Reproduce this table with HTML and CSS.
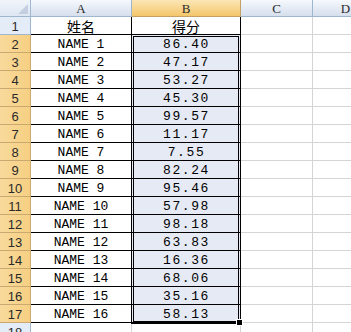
FILE: index.html
```html
<!DOCTYPE html>
<html>
<head>
<meta charset="utf-8">
<link rel="stylesheet" href="styles.css">
</head>
<body>
<div class="sheet">
  <div class="corner"><svg class="tri" width="10" height="10" viewBox="0 0 10 10"><polygon points="10,0 10,10 0,10" fill="#c3cfe0"/></svg></div>
  <div class="ch">A</div>
  <div class="ch sel">B</div>
  <div class="ch">C</div>
  <div class="ch last">D</div>

  <div class="rh">1</div><div class="c a t cjk">姓名</div><div class="c b t cjk">得分</div><div class="g"></div><div class="g last"></div>
  <div class="rh sel">2</div><div class="c a">NAME 1</div><div class="c b n">86.40</div><div class="g"></div><div class="g last"></div>
  <div class="rh sel">3</div><div class="c a">NAME 2</div><div class="c b n">47.17</div><div class="g"></div><div class="g last"></div>
  <div class="rh sel">4</div><div class="c a">NAME 3</div><div class="c b n">53.27</div><div class="g"></div><div class="g last"></div>
  <div class="rh sel">5</div><div class="c a">NAME 4</div><div class="c b n">45.30</div><div class="g"></div><div class="g last"></div>
  <div class="rh sel">6</div><div class="c a">NAME 5</div><div class="c b n">99.57</div><div class="g"></div><div class="g last"></div>
  <div class="rh sel">7</div><div class="c a">NAME 6</div><div class="c b n">11.17</div><div class="g"></div><div class="g last"></div>
  <div class="rh sel">8</div><div class="c a">NAME 7</div><div class="c b n">7.55</div><div class="g"></div><div class="g last"></div>
  <div class="rh sel">9</div><div class="c a">NAME 8</div><div class="c b n">82.24</div><div class="g"></div><div class="g last"></div>
  <div class="rh sel">10</div><div class="c a">NAME 9</div><div class="c b n">95.46</div><div class="g"></div><div class="g last"></div>
  <div class="rh sel">11</div><div class="c a">NAME 10</div><div class="c b n">57.98</div><div class="g"></div><div class="g last"></div>
  <div class="rh sel">12</div><div class="c a">NAME 11</div><div class="c b n">98.18</div><div class="g"></div><div class="g last"></div>
  <div class="rh sel">13</div><div class="c a">NAME 12</div><div class="c b n">63.83</div><div class="g"></div><div class="g last"></div>
  <div class="rh sel">14</div><div class="c a">NAME 13</div><div class="c b n">16.36</div><div class="g"></div><div class="g last"></div>
  <div class="rh sel">15</div><div class="c a">NAME 14</div><div class="c b n">68.06</div><div class="g"></div><div class="g last"></div>
  <div class="rh sel">16</div><div class="c a">NAME 15</div><div class="c b n">35.16</div><div class="g"></div><div class="g last"></div>
  <div class="rh sel">17</div><div class="c a">NAME 16</div><div class="c b n">58.13</div><div class="g"></div><div class="g last"></div>
  <div class="rh">18</div><div class="g"></div><div class="g"></div><div class="g"></div><div class="g last"></div>

  <div class="selection"><div class="handle"></div></div>
</div>
</body>
</html>
```
FILE: styles.css
```css
html, body {
  margin: 0;
  padding: 0;
  background: #ffffff;
  overflow: hidden;
}
.sheet {
  position: relative;
  display: grid;
  grid-template-columns: 31px 101px 109px 72px 66px;
  grid-template-rows: 17px;
  grid-auto-rows: 18px;
  width: 351px;
  height: 332px;
  overflow: hidden;
}
.sheet > div {
  box-sizing: border-box;
}
.corner {
  position: relative;
  background: linear-gradient(#f1f5fb, #dde6f2);
  border-right: 1px solid #9eb6ce;
  border-bottom: 1px solid #9eb6ce;
}
.tri {
  position: absolute;
  right: 2px;
  bottom: 2px;
}
.ch {
  background: linear-gradient(#f6f9fd, #e2e9f4 60%, #d6dfec);
  border-right: 1px solid #9eb6ce;
  border-bottom: 1px solid #9eb6ce;
  font-family: "Liberation Serif", serif;
  font-size: 13px;
  color: #2a2a2a;
  display: flex;
  align-items: flex-end;
  justify-content: center;
  line-height: 15px;
}
.ch.sel {
  background: linear-gradient(#fbe5b4, #f8d58e 55%, #f3c66a);
  border-right-color: #c2a067;
  border-bottom-color: #c2a067;
}
.rh {
  background: #e4ecf7;
  border-right: 1px solid #9eb6ce;
  border-bottom: 1px solid #9eb6ce;
  font-family: "Liberation Sans", sans-serif;
  font-size: 13px;
  color: #2a2a2a;
  display: flex;
  align-items: center;
  justify-content: center;
  padding-top: 1px;
}
.rh.sel {
  background: linear-gradient(90deg, #f9da9c, #f6cf82);
  border-bottom-color: #c9a970;
  border-right-color: #c9a970;
}
.c {
  border-right: 1px solid #000;
  border-bottom: 1px solid #000;
  font-family: "Liberation Mono", monospace;
  font-size: 13px;
  color: #000;
  display: flex;
  align-items: center;
  justify-content: center;
  padding-top: 1px;
  white-space: pre;
}
.c.b {
  background: #e6eaf5;
}
.c.t {
  background: #fff;
}
.n {
  letter-spacing: 1.6px;
  padding-left: 1px;
}
.cjk {
  font-family: "Noto Sans CJK SC", sans-serif;
  font-size: 14px;
  line-height: 17px;
}
.g {
  border-right: 1px solid #d4d4d4;
  border-bottom: 1px solid #d4d4d4;
}
.selection {
  position: absolute;
  left: 131px;
  top: 34px;
  width: 110px;
  height: 290px;
  box-sizing: border-box;
  border: 3px double #000;
  pointer-events: none;
}
.handle {
  position: absolute;
  right: -5px;
  bottom: -5px;
  width: 5px;
  height: 5px;
  background: #000;
  border: 1px solid #fff;
}
```
